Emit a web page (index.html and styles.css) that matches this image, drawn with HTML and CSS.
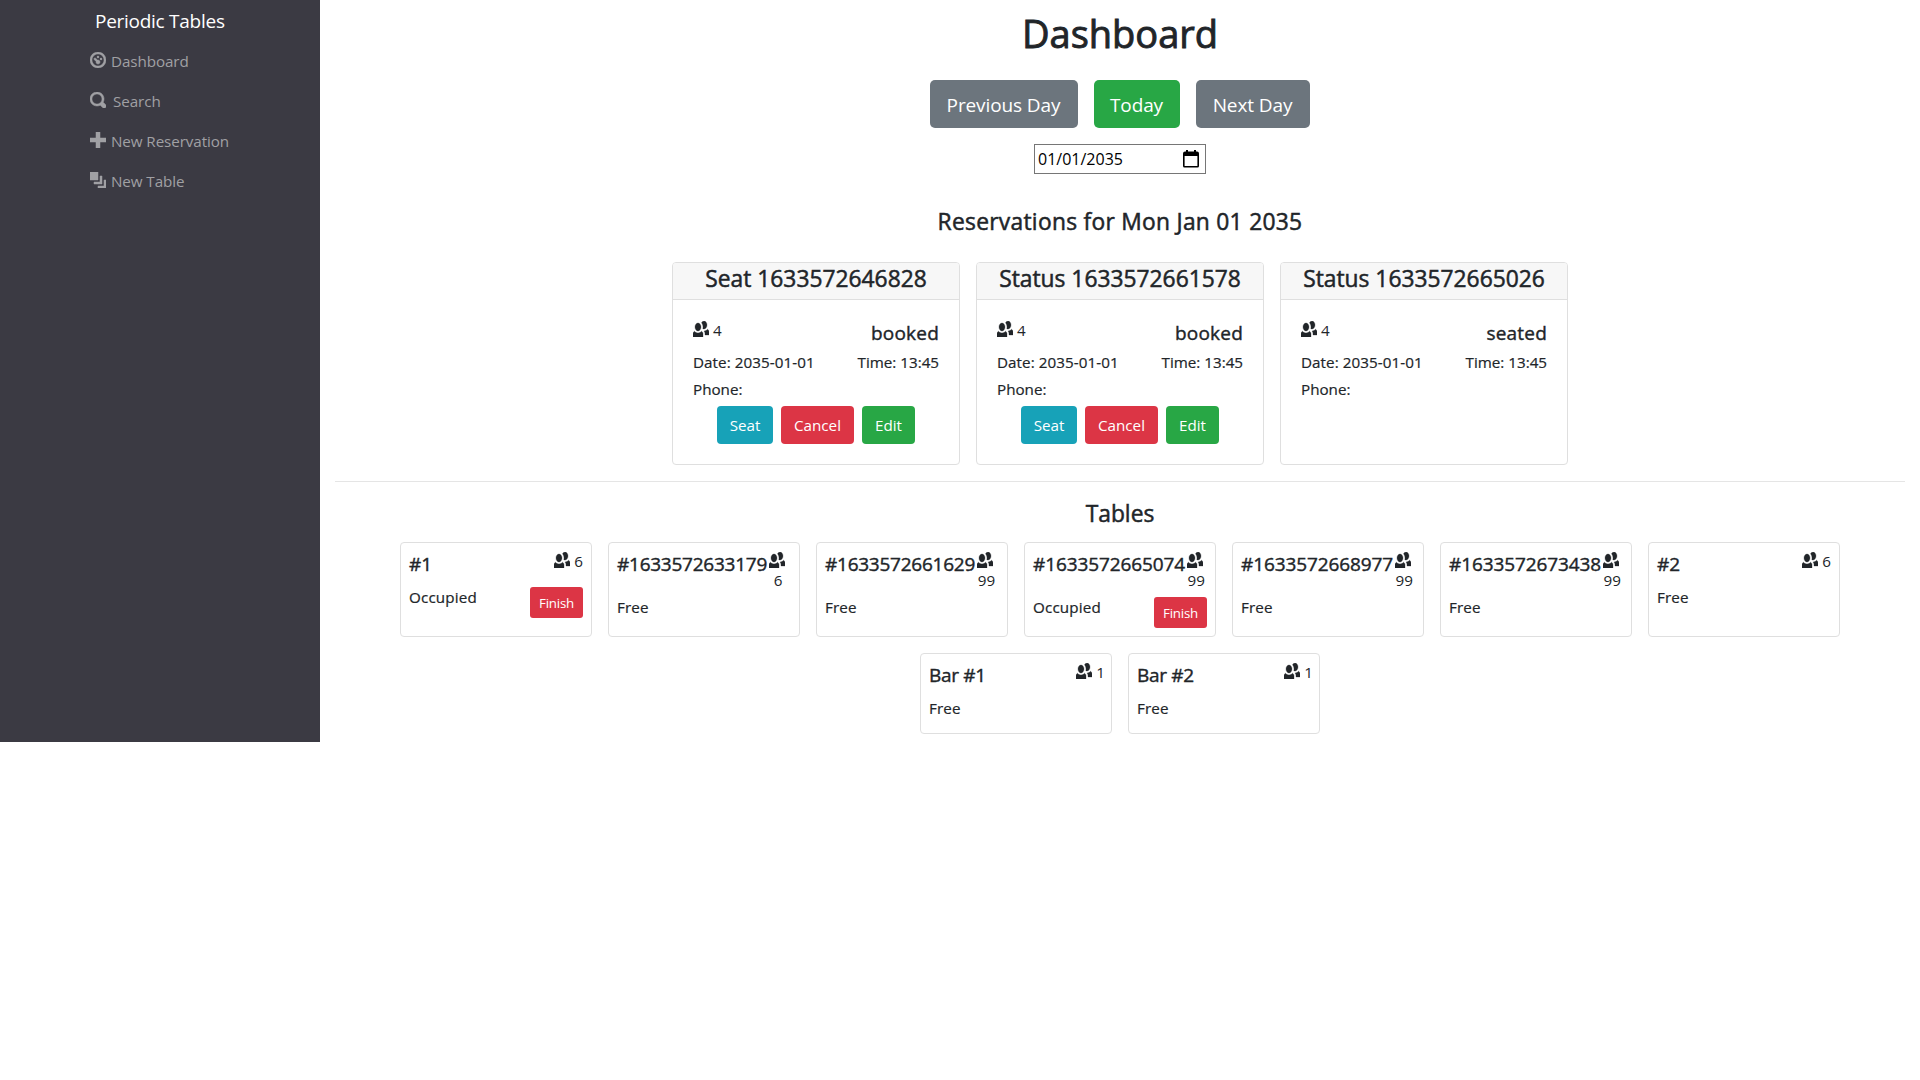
FILE: index.html
```html
<!DOCTYPE html>
<html lang="en">
<head>
<meta charset="utf-8">
<title>Periodic Tables</title>
<link rel="stylesheet" href="styles.css">
</head>
<body>
<svg class="sprite" aria-hidden="true">
  <symbol id="people" viewBox="0 0 8 8"><path d="M5.5 0c-.51 0-.95.35-1.22.88.45.54.72 1.28.72 2.13 0 .29-.03.55-.09.81.19.11.38.19.59.19.83 0 1.5-.9 1.5-2s-.67-2-1.5-2zm-3 1c-.83 0-1.5.9-1.5 2s.67 2 1.5 2 1.5-.9 1.5-2-.67-2-1.5-2zm4.75 3.16c-.43.51-1.02.82-1.69.84.27.38.44.84.44 1.34v.66h2v-1.66c0-.52-.31-.97-.75-1.19zm-6.5 1c-.44.22-.75.67-.75 1.19v1.66h5v-1.66c0-.52-.31-.97-.75-1.19-.45.53-1.06.84-1.75.84s-1.3-.32-1.75-.84z"/></symbol>
  <symbol id="dashboard" viewBox="0 0 8 8"><path d="M4 0c-2.2 0-4 1.8-4 4s1.8 4 4 4 4-1.8 4-4-1.8-4-4-4zm0 1c1.66 0 3 1.34 3 3s-1.34 3-3 3-3-1.34-3-3 1.34-3 3-3zm0 1c-.28 0-.5.22-.5.5s.22.5.5.5.5-.22.5-.5-.22-.5-.5-.5zm-1.66 1a.5.5 0 0 0-.19.84l.91.91c-.02.08-.06.16-.06.25 0 .55.45 1 1 1s1-.45 1-1-.45-1-1-1c-.09 0-.17.04-.25.06l-.91-.91a.5.5 0 0 0-.44-.16.5.5 0 0 0-.06 0zm3.16 0c-.28 0-.5.22-.5.5s.22.5.5.5.5-.22.5-.5-.22-.5-.5-.5z"/></symbol>
  <symbol id="search" viewBox="0 0 8 8"><path d="M3.5 0c-1.93 0-3.5 1.57-3.5 3.5s1.57 3.5 3.5 3.5c.59 0 1.17-.14 1.66-.41a1 1 0 0 0 .13.13l1 1a1.02 1.02 0 1 0 1.44-1.44l-1-1a1 1 0 0 0-.16-.13c.27-.49.44-1.06.44-1.66 0-1.93-1.55-3.5-3.5-3.5zm0 1c1.39 0 2.5 1.11 2.5 2.5 0 .66-.24 1.27-.66 1.72-.01.01-.02.02-.03.03a1 1 0 0 0-.13.13c-.44.4-1.04.63-1.69.63-1.39 0-2.5-1.11-2.5-2.5s1.11-2.5 2.5-2.5z"/></symbol>
  <symbol id="plus" viewBox="0 0 8 8"><path d="M3 0v3h-3v2h3v3h2v-3h3v-2h-3v-3h-2z"/></symbol>
  <symbol id="layers" viewBox="0 0 8 8"><path d="M0 0v4h4v-4h-4zm5 2v3h-3v1h4v-4h-1zm2 2v3h-3v1h4v-4h-1z"/></symbol>
  <symbol id="calendar" viewBox="0 0 16 18"><path d="M2 1.500h1V0h2v1.500h6V0h2v1.500h1a2 2 0 0 1 2 2v12.500a1.500 1.500 0 0 1-1.500 1.500h-13a1.500 1.500 0 0 1-1.500-1.500V3.500a2 2 0 0 1 2-2zm-.4 4.500v10h12.800V6z"/></symbol>
</svg>
<div class="layout">
  <nav class="sidebar">
    <a class="brand"><span>Periodic Tables</span></a>
    <ul class="menu">
      <li><svg class="icon"><use href="#dashboard"/></svg><span>Dashboard</span></li>
      <li class="wide"><svg class="icon"><use href="#search"/></svg><span>Search</span></li>
      <li><svg class="icon"><use href="#plus"/></svg><span>New Reservation</span></li>
      <li><svg class="icon"><use href="#layers"/></svg><span>New Table</span></li>
    </ul>
  </nav>
  <main class="content">
    <h1><span>Dashboard</span></h1>
    <div class="days">
      <button class="btn lg grey prev"><span>Previous Day</span></button>
      <button class="btn lg green today"><span>Today</span></button>
      <button class="btn lg grey next"><span>Next Day</span></button>
    </div>
    <div class="date"><span>01/01/2035</span><svg class="calendar"><use href="#calendar"/></svg></div>
    <h4 class="reservations-title"><span>Reservations for Mon Jan 01 2035</span></h4>
    <section class="reservations">
      <article class="card reservation">
        <h4 class="card-header"><span>Seat 1633572646828</span></h4>
        <div class="card-body">
          <div class="row top"><span class="party"><svg class="icon"><use href="#people"/></svg><span>4</span></span><span class="status">booked</span></div>
          <div class="row info"><span>Date: 2035-01-01</span><span>Time: 13:45</span></div>
          <div class="row phone"><span>Phone:</span></div>
          <div class="actions"><button class="btn teal seat"><span>Seat</span></button><button class="btn red cancel"><span>Cancel</span></button><button class="btn green edit"><span>Edit</span></button></div>
        </div>
      </article>
      <article class="card reservation">
        <h4 class="card-header"><span>Status 1633572661578</span></h4>
        <div class="card-body">
          <div class="row top"><span class="party"><svg class="icon"><use href="#people"/></svg><span>4</span></span><span class="status">booked</span></div>
          <div class="row info"><span>Date: 2035-01-01</span><span>Time: 13:45</span></div>
          <div class="row phone"><span>Phone:</span></div>
          <div class="actions"><button class="btn teal seat"><span>Seat</span></button><button class="btn red cancel"><span>Cancel</span></button><button class="btn green edit"><span>Edit</span></button></div>
        </div>
      </article>
      <article class="card reservation">
        <h4 class="card-header"><span>Status 1633572665026</span></h4>
        <div class="card-body">
          <div class="row top"><span class="party"><svg class="icon"><use href="#people"/></svg><span>4</span></span><span class="status">seated</span></div>
          <div class="row info"><span>Date: 2035-01-01</span><span>Time: 13:45</span></div>
          <div class="row phone"><span>Phone:</span></div>
        </div>
      </article>
    </section>
    <hr>
    <h4 class="tables-title"><span>Tables</span></h4>
    <section class="tables">
      <article class="card table"><div class="row head"><h5>#1</h5><span class="seats"><svg class="icon"><use href="#people"/></svg><span>6</span></span></div><div class="row foot"><span>Occupied</span><button class="btn sm red"><span>Finish</span></button></div></article>
      <article class="card table stacked roomy"><div class="row head"><h5>#1633572633179</h5><span class="seats"><svg class="icon"><use href="#people"/></svg><span class="digit">6</span></span></div><div class="row foot"><span>Free</span></div></article>
      <article class="card table stacked roomy"><div class="row head"><h5>#1633572661629</h5><span class="seats"><svg class="icon"><use href="#people"/></svg><span>99</span></span></div><div class="row foot"><span>Free</span></div></article>
      <article class="card table stacked"><div class="row head"><h5>#1633572665074</h5><span class="seats"><svg class="icon"><use href="#people"/></svg><span>99</span></span></div><div class="row foot"><span>Occupied</span><button class="btn sm red"><span>Finish</span></button></div></article>
      <article class="card table stacked"><div class="row head"><h5>#1633572668977</h5><span class="seats"><svg class="icon"><use href="#people"/></svg><span>99</span></span></div><div class="row foot"><span>Free</span></div></article>
      <article class="card table stacked"><div class="row head"><h5>#1633572673438</h5><span class="seats"><svg class="icon"><use href="#people"/></svg><span>99</span></span></div><div class="row foot"><span>Free</span></div></article>
      <article class="card table"><div class="row head"><h5>#2</h5><span class="seats"><svg class="icon"><use href="#people"/></svg><span>6</span></span></div><div class="row foot"><span>Free</span></div></article>
      <article class="card table bar"><div class="row head"><h5>Bar #1</h5><span class="seats"><svg class="icon"><use href="#people"/></svg><span>1</span></span></div><div class="row foot"><span>Free</span></div></article>
      <article class="card table bar"><div class="row head"><h5>Bar #2</h5><span class="seats"><svg class="icon"><use href="#people"/></svg><span>1</span></span></div><div class="row foot"><span>Free</span></div></article>
    </section>
  </main>
</div>
</body>
</html>
```
FILE: styles.css
```css
*, *::before, *::after { box-sizing: border-box; }

body {
  margin: 0;
  background: #fff;
  color: #212529;
  font: 400 15.2px/24px "Open Sans", "Noto Sans", sans-serif;
}

h1, h4, h5, ul { margin: 0; padding: 0; font-weight: 400; }

/* Medium weight */
h1 { -webkit-text-stroke: 0.9px currentColor; }
h4 { -webkit-text-stroke: 0.5px currentColor; }
h5, .status { -webkit-text-stroke: 0.4px currentColor; }
.info, .phone, .foot > span { -webkit-text-stroke: 0.2px currentColor; }

.sprite { display: none; }
.icon { width: 16px; height: 16px; flex: none; overflow: visible; fill: currentColor; stroke: currentColor; stroke-width: 0.15; }
.icon use { overflow: visible; }

.layout { display: flex; height: 742px; }

/* Sidebar */
.sidebar { width: 320px; flex: none; background: #3b3a43; }
.brand { display: block; height: 41px; padding: 6px 0 0 95px; color: #fff; font-size: 19px; line-height: 30px; letter-spacing: -0.27px; }
.menu { list-style: none; color: #a0a0a4; padding-left: 90px; letter-spacing: -0.08px; }
.menu li { display: flex; height: 40px; padding-top: 8px; gap: 5px; }
.menu .icon { margin-top: 3px; stroke-width: 0.25; }
.menu .wide { gap: 7px; }

/* Main column */
.content { width: 1600px; padding: 0 15px; display: flex; flex-direction: column; align-items: center; }
h1 { margin-top: 8px; font-size: 38px; line-height: 50px; }

.btn {
  border: 0; border-radius: 4px; padding: 0; height: 38px;
  display: flex; align-items: center; justify-content: center;
  font: inherit; color: #fff;
}
.lg { height: 48px; padding: 1px 1px 0 0; border-radius: 5px; font-size: 19px; letter-spacing: -0.1px; }
.sm { width: 53px; height: 31px; border-radius: 3px; font-size: 13.3px; letter-spacing: -0.2px; }
.grey { background: #6c757d; }
.green { background: #28a745; }
.teal { background: #17a2b8; }
.red { background: #dc3545; }

.days { display: flex; gap: 16px; margin-top: 22px; }
.prev { width: 148px; }
.today { width: 86px; }
.next { width: 114px; }

.date {
  width: 172px; height: 30px; margin-top: 16px; padding: 0 6px 0 3px;
  display: flex; align-items: center; justify-content: space-between;
  border: 1px solid #767676; color: #000; font-size: 16px;
}
.calendar { width: 16px; height: 18px; }

.reservations-title, .tables-title { font-size: 22.8px; line-height: 29px; }
.reservations-title { margin-top: 33px; letter-spacing: 0.28px; }

.card { border: 1px solid #dfdfdf; border-radius: 4px; background: #fff; }
.reservations { display: flex; gap: 16px; margin-top: 26px; }
.reservation { width: 288px; height: 203px; }
.card-header {
  height: 37px; padding-top: 1px; text-align: center; font-size: 22.8px; line-height: 30px;
  background: #f7f7f7; border-bottom: 1px solid #dfdfdf; border-radius: 3px 3px 0 0;
}
.card-body { padding: 20px 20px 0; }
.row { display: flex; justify-content: space-between; }
.top { height: 30px; }
.party { display: flex; gap: 4px; line-height: 20px; }
.party .icon { margin-top: 1px; }
.status { font-size: 19px; line-height: 27px; letter-spacing: 0.2px; }
.info, .phone { height: 27px; line-height: 24px; }
.info span:first-child { letter-spacing: 0.08px; }
.actions { display: flex; justify-content: center; gap: 8px; margin-top: 2px; }
.seat { width: 56px; }
.cancel { width: 73px; }
.edit { width: 53px; }

hr { width: 1570px; height: 1px; margin: 16px 0 0; border: 0; background: #e5e5e5; }
.tables-title { margin-top: 17px; }

.tables { width: 1456px; display: flex; flex-wrap: wrap; justify-content: center; gap: 16px; margin-top: 14px; }
.table { width: 192px; min-height: 81px; padding: 8px; }
.head { height: 36px; }
h5 { font-size: 19px; line-height: 26px; letter-spacing: -0.1px; white-space: nowrap; }
.seats { display: flex; gap: 4px; line-height: 20px; }
.seats .icon { margin-top: 1px; }
.bar .seats { margin-right: -2px; }
.bar h5 { letter-spacing: -0.3px; }
.foot { line-height: 20px; }
.foot > span { letter-spacing: 0.15px; }

.stacked .head { height: 46px; }
.stacked h5 { width: 0; }
.stacked .seats { flex-direction: column; gap: 0; width: 20.5px; line-height: 24px; padding-left: 1px; }
.stacked .icon { margin-left: -1px; }
.roomy h5 { letter-spacing: -0.25px; }
.roomy .seats { width: 22.3px; }
.stacked .digit { padding-left: 4px; }
```
